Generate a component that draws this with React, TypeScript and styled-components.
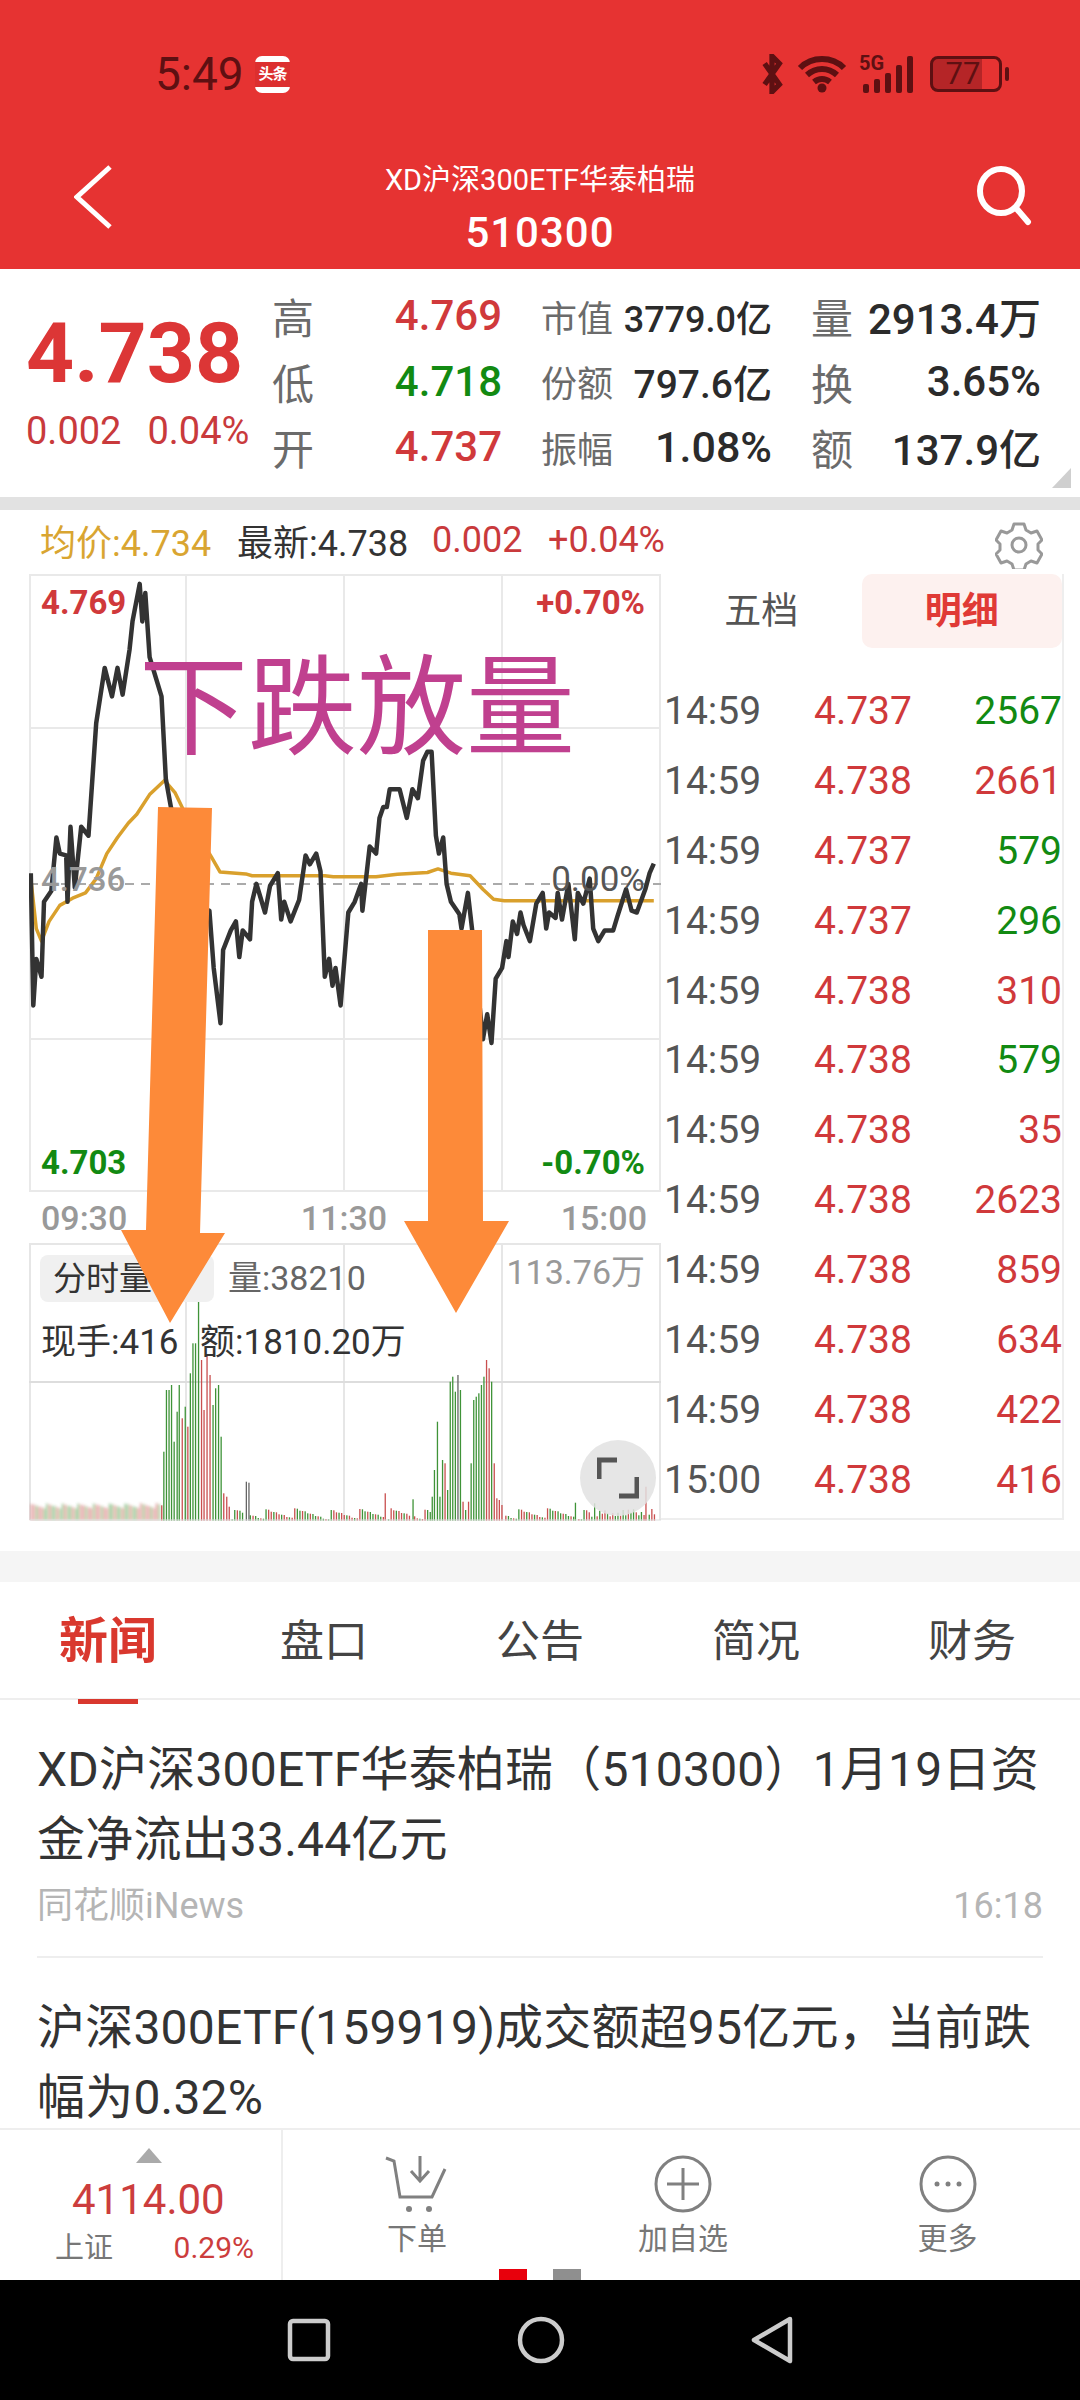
import React from 'react'
import styled, { createGlobalStyle } from 'styled-components'

const RED = '#d0393b'
const GREEN = '#128a12'

const GlobalStyle = createGlobalStyle`
  html, body { margin: 0; padding: 0; background: #fff; }
  body { font-family: Roboto, "Noto Sans CJK SC", sans-serif; }
`

const Page = styled.div`
  width: 1080px;
  height: 2400px;
  display: flex;
  flex-direction: column;
  overflow: hidden;
  background: #fff;
  position: relative;
`

/* top red part */
const RedHead = styled.header`
  height: 269px;
  background: #e63332;
  flex: none;
  display: flex;
  flex-direction: column;
`
const StatusBar = styled.div`
  height: 146px;
  padding: 54px 78px 0 155px;
  box-sizing: border-box;
  display: flex;
  align-items: flex-start;
  color: #5e1012;
`
const Clock = styled.span`
  font-size: 46px;
  line-height: 40px;
  width: 100px;
`
const AppBadge = styled.span`
  width: 35px;
  height: 37px;
  margin-top: 2px;
  border-radius: 7px;
  background: linear-gradient(#fff 0 15%, #dc2f2f 15% 85%, #fff 85%);
  color: #fff;
  font-size: 15px;
  font-weight: 700;
  line-height: 37px;
  text-align: center;
  white-space: nowrap;
  letter-spacing: -1px;
`
const StatusIcons = styled.div`
  margin-left: auto;
  display: flex;
  align-items: center;
  height: 40px;
  gap: 12px;
`
const SignalWrap = styled.span`
  position: relative;
  width: 56px;
  height: 38px;
  svg { display: block; }
`
const SignalTag = styled.span`
  position: absolute;
  left: 0;
  top: -2px;
  font-size: 20px;
  font-weight: 700;
  line-height: 20px;
`
const BatteryBox = styled.span`
  width: 72px;
  height: 36px;
  margin-left: 3px;
  border: 3px solid #5e1012;
  border-radius: 8px;
  box-sizing: border-box;
  background: linear-gradient(90deg, #b52527 0 74%, transparent 74%);
  font-size: 31px;
  line-height: 30px;
  text-align: center;
  padding-right: 6px;
  position: relative;
  &::after {
    content: '';
    position: absolute;
    right: -10px;
    top: 8px;
    width: 4px;
    height: 14px;
    border-radius: 2px;
    background: #5e1012;
  }
`
const NavRow = styled.div`
  flex: 1;
  display: grid;
  grid-template-columns: 160px 1fr 160px;
  align-items: start;
`
const BackIcon = styled.svg`
  margin: 18px 0 0 74px;
`
const SearchIcon = styled.svg`
  margin: 20px 46px 0 0;
  justify-self: end;
`
const TitleBlock = styled.div`
  text-align: center;
  color: #fff;
  padding-top: 14px;
`
const TitleName = styled.div`
  font-size: 29px;
  line-height: 40px;
`
const TitleCode = styled.div`
  font-size: 42px;
  font-weight: 500;
  line-height: 50px;
  margin-top: 8px;
  letter-spacing: 1px;
`

/* quote block */
const QuotePanel = styled.section`
  height: 228px;
  flex: none;
  display: flex;
  position: relative;
  background: #fff;
  padding-top: 14px;
  box-sizing: border-box;
`
const PriceCol = styled.div`
  width: 272px;
  padding-left: 26px;
  box-sizing: border-box;
  color: ${RED};
`
const BigPrice = styled.div`
  font-size: 84px;
  font-weight: 700;
  line-height: 96px;
  margin-top: 23px;
  color: #dc3636;
`
const PriceSub = styled.div`
  font-size: 38px;
  line-height: 44px;
  margin-top: 7px;
  display: flex;
  gap: 26px;
  color: #c93a3c;
`
const QuoteGrid = styled.div`
  display: grid;
  grid-template-columns: 230px 231px 230px;
  grid-auto-rows: 65.5px;
  column-gap: 39px;
  align-items: center;
`
const QuoteCell = styled.div`
  display: flex;
  justify-content: space-between;
  align-items: center;
  white-space: nowrap;
`
const QuoteLabel = styled.span<{ $size?: number }>`
  font-size: ${p => p.$size ?? 42}px;
  color: #6b6b6b;
`
const QuoteValue = styled.span<{ $size?: number; $color?: string; $weight?: number }>`
  font-size: ${p => p.$size ?? 42}px;
  color: ${p => p.$color ?? '#2b2b2b'};
  font-weight: ${p => p.$weight ?? 500};
`
const CornerMark = styled.span`
  position: absolute;
  right: 9px;
  bottom: 9px;
  width: 19px;
  height: 20px;
  background: #cfcfcf;
  clip-path: polygon(100% 0, 100% 100%, 0 100%);
`
const GrayStrip = styled.div<{ $h: number; $c: string }>`
  height: ${p => p.$h}px;
  background: ${p => p.$c};
  flex: none;
`

/* chart section */
const ChartSection = styled.section`
  height: 1041px;
  flex: none;
  position: relative;
`
const ChartHeader = styled.div`
  height: 64px;
  padding: 0 0 4px 40px;
  box-sizing: border-box;
  display: flex;
  align-items: center;
  font-size: 36px;
  white-space: nowrap;
  position: relative;
`
const HeadText = styled.span<{ $color: string; $w: number }>`
  color: ${p => p.$color};
  width: ${p => p.$w}px;
`
const GearWrap = styled.span`
  position: absolute;
  left: 995px;
  top: 11px;
  line-height: 0;
`
const ChartBody = styled.div`
  display: flex;
  padding-left: 29px;
`
const ChartCol = styled.div`
  width: 632px;
  flex: none;
`
const PlotBox = styled.div<{ $h: number }>`
  position: relative;
  height: ${p => p.$h}px;
  svg { display: block; }
`
const PlotLabel = styled.span<{
  $left?: number
  $right?: number
  $top: number
  $color: string
  $size?: number
  $weight?: number
}>`
  position: absolute;
  ${p => (p.$left !== undefined ? `left: ${p.$left}px;` : '')}
  ${p => (p.$right !== undefined ? `right: ${p.$right}px;` : '')}
  top: ${p => p.$top}px;
  color: ${p => p.$color};
  font-size: ${p => p.$size ?? 33}px;
  font-weight: ${p => p.$weight ?? 500};
  line-height: 40px;
  white-space: nowrap;
`
const TimeAxis = styled.div`
  height: 51px;
  padding: 0 14px 0 12px;
  display: flex;
  justify-content: space-between;
  align-items: center;
  color: #999;
  font-size: 34px;
  font-weight: 500;
`
const ModeChip = styled.span`
  position: absolute;
  left: 11px;
  top: 12px;
  width: 174px;
  height: 47px;
  padding-left: 13px;
  box-sizing: border-box;
  border-radius: 8px;
  background: #f0f0f0;
  color: #333;
  font-size: 33px;
  line-height: 47px;
`
const ExpandButton = styled.span`
  position: absolute;
  left: 551px;
  top: 197px;
  width: 76px;
  height: 76px;
  border-radius: 50%;
  background: rgba(226, 226, 226, 0.85);
  display: flex;
  align-items: center;
  justify-content: center;
`
const TradePanel = styled.div`
  width: 403px;
  height: 946px;
  flex: none;
  box-sizing: border-box;
  border-right: 2px solid #eee;
  border-bottom: 2px solid #eee;
`
const TabRow = styled.div`
  display: flex;
  height: 74px;
  margin-bottom: 28px;
`
const TradeTab = styled.div<{ $on?: boolean }>`
  flex: 1;
  text-align: center;
  font-size: 37px;
  line-height: 76px;
  border-radius: 10px;
  color: ${p => (p.$on ? '#e03a36' : '#555')};
  font-weight: ${p => (p.$on ? 700 : 400)};
  background: ${p => (p.$on ? '#fdf1ef' : 'transparent')};
`
const TradeRow = styled.div`
  height: 69.9px;
  padding-left: 3px;
  display: grid;
  grid-template-columns: 150px 97px 1fr;
  align-items: center;
  font-size: 39px;
`
const TradeTime = styled.span`
  color: #555;
`
const TradePrice = styled.span`
  color: ${RED};
`
const TradeVol = styled.span<{ $up: boolean }>`
  color: ${p => (p.$up ? RED : GREEN)};
  text-align: right;
`
const Annotation = styled.div`
  position: absolute;
  left: 139px;
  top: 142px;
  color: #c0408f;
  font-size: 109px;
  font-weight: 400;
  line-height: 114px;
  white-space: nowrap;
`
const ArrowLayer = styled.svg`
  position: absolute;
  left: 0;
  top: 0;
  pointer-events: none;
`

/* news */
const NewsTabs = styled.nav`
  height: 116px;
  flex: none;
  display: grid;
  grid-template-columns: repeat(5, 1fr);
  border-bottom: 2px solid #eee;
`
const NewsTab = styled.div<{ $on?: boolean }>`
  text-align: center;
  font-size: ${p => (p.$on ? 49 : 44)}px;
  font-weight: ${p => (p.$on ? 700 : 400)};
  color: ${p => (p.$on ? '#d9382e' : '#444')};
  line-height: 120px;
  position: relative;
  ${p =>
    p.$on
      ? `&::after {
    content: '';
    position: absolute;
    left: 78px;
    bottom: -2px;
    width: 60px;
    height: 5px;
    background: #d9382e;
  }`
      : ''}
`
const NewsList = styled.div`
  flex: 1;
  min-height: 0;
  overflow: hidden;
  padding: 0 37px;
`
const NewsItem = styled.article`
  padding-top: 35px;
  height: 221px;
  box-sizing: content-box;
  border-bottom: 2px solid #eee;
  &:last-child { border-bottom: 0; }
`
const NewsTitle = styled.div`
  font-size: 48px;
  letter-spacing: 0.2px;
  line-height: 70px;
  color: #333;
`
const NewsMeta = styled.div`
  margin-top: 8px;
  display: flex;
  justify-content: space-between;
  font-size: 36px;
  line-height: 46px;
  color: #b5b5b5;
`

/* bottom action bar */
const ActionBar = styled.footer`
  height: 152px;
  flex: none;
  display: flex;
  border-top: 2px solid #eee;
  box-sizing: border-box;
  position: relative;
  overflow: hidden;
`
const IndexBox = styled.div`
  width: 283px;
  flex: none;
  box-sizing: border-box;
  border-right: 2px solid #eee;
  padding: 18px 27px 0 55px;
  display: flex;
  flex-direction: column;
`
const UpMark = styled.span`
  width: 26px;
  height: 15px;
  margin-left: 81px;
  background: #aaa;
  clip-path: polygon(50% 0, 100% 100%, 0 100%);
`
const IndexValue = styled.div`
  color: #cc3d3d;
  font-size: 42px;
  line-height: 50px;
  margin: 12px 0 0 17px;
`
const IndexMeta = styled.div`
  display: flex;
  justify-content: space-between;
  font-size: 29px;
  line-height: 40px;
  margin-top: 3px;
  color: #777;
`
const IndexPct = styled.span`
  color: #cc3d3d;
  font-size: 30px;
`
const ActionList = styled.div`
  flex: 1;
  display: grid;
  grid-template-columns: 268px 264px 265px;
`
const ActionItem = styled.div`
  display: flex;
  flex-direction: column;
  align-items: center;
  padding-top: 25px;
  color: #777;
  font-size: 30px;
  line-height: 40px;
  svg { display: block; margin-bottom: 6px; }
`
const PagerDot = styled.span<{ $left: number; $c: string }>`
  position: absolute;
  left: ${p => p.$left}px;
  bottom: 0;
  width: 28px;
  height: 11px;
  background: ${p => p.$c};
`
const SystemNav = styled.div`
  height: 120px;
  flex: none;
  background: #000;
  display: flex;
  align-items: center;
  justify-content: center;
  gap: 186px;
`

type Pt = [number, number]

// traced from the reference crops, in crop pixels
const priceTrace: Pt[] = [
  [72, 1045], [78, 1415], [85, 1285], [97, 1335], [103, 1125], [120, 1095], [132, 945], [140, 990], [155, 995],
  [158, 1125], [165, 915], [175, 1085], [190, 915], [207, 940], [225, 625], [245, 470], [262, 550], [275, 470],
  [287, 545], [303, 420], [310, 340], [327, 235], [333, 340], [340, 260], [350, 440], [378, 550], [388, 780],
  [400, 860], [470, 1200], [490, 1150], [500, 1310], [516, 1465], [522, 1260], [540, 1205], [552, 1180],
  [560, 1280], [568, 1205], [585, 1230], [590, 1125], [600, 1075], [620, 1155], [632, 1080], [650, 1045],
  [658, 1175], [665, 1125], [680, 1180], [700, 1120], [715, 995], [725, 1020], [740, 990], [750, 1040],
  [760, 1335], [770, 1285], [778, 1360], [785, 1310], [797, 1415], [815, 1155], [830, 1125], [845, 1075],
  [848, 1150], [865, 970], [880, 990], [888, 890], [897, 860], [905, 860], [912, 810], [935, 810], [952, 890],
  [965, 810], [978, 835], [990, 730], [1000, 705], [1010, 705], [1020, 940], [1027, 990], [1037, 945],
  [1045, 1075], [1055, 1125], [1075, 1160], [1080, 1200], [1095, 1100], [1105, 1205], [1130, 1510], [1140, 1440],
  [1150, 1520], [1160, 1340], [1175, 1310], [1185, 1235], [1190, 1280], [1200, 1180], [1210, 1215], [1218, 1155],
  [1225, 1190], [1240, 1235], [1255, 1130], [1270, 1100], [1278, 1200], [1285, 1155], [1300, 1170], [1305, 1100],
  [1315, 1175], [1330, 1075], [1345, 1230], [1352, 1100], [1365, 1130], [1380, 1060], [1388, 1200], [1400, 1235],
  [1415, 1205], [1435, 1205], [1445, 1165], [1465, 1090], [1478, 1150], [1490, 1155], [1510, 1090], [1520, 1045],
  [1530, 1018],
]
const avgTrace: Pt[] = [
  [72, 1060], [85, 1200], [97, 1235], [115, 1180], [140, 1135], [170, 1115], [200, 1100], [225, 1060], [250, 990],
  [275, 945], [300, 905], [320, 880], [350, 825], [385, 785], [410, 820], [430, 870], [495, 1000], [515, 1042],
  [575, 1047], [590, 1052], [760, 1052], [780, 1055], [880, 1055], [930, 1048], [1000, 1043], [1025, 1033],
  [1055, 1045], [1100, 1052], [1130, 1090], [1155, 1118], [1180, 1122], [1530, 1122],
]
const toLine = (pts: Pt[]) =>
  pts.map(([x, y]) => `${(x / 2.34 - 29).toFixed(1)},${(500 + y / 2.8 - 574).toFixed(1)}`).join(' ')

// [crop x, crop top, colour]
type Bar = [number, number, 'g' | 'r' | 'k']
const bigBars: Bar[] = [
  [382, 1175, 'g'], [388, 990, 'g'], [394, 990, 'g'], [400, 975, 'g'], [406, 1145, 'g'], [413, 1055, 'g'],
  [418, 975, 'g'], [425, 1075, 'r'], [432, 1040, 'g'], [438, 1100, 'r'], [444, 940, 'g'], [450, 850, 'g'],
  [456, 850, 'g'], [463, 650, 'g'], [470, 900, 'r'], [476, 1050, 'r'], [483, 885, 'r'], [490, 945, 'r'],
  [497, 1035, 'g'], [503, 985, 'g'], [510, 975, 'g'], [516, 1130, 'g'], [522, 1300, 'r'], [529, 1310, 'r'],
  [535, 1340, 'r'], [575, 1265, 'k'], [581, 1268, 'k'], [900, 1300, 'r'], [965, 1318, 'g'],
  [1010, 1310, 'g'], [1015, 1230, 'g'], [1022, 1085, 'g'], [1028, 1310, 'g'], [1034, 1200, 'g'], [1040, 1210, 'r'],
  [1046, 1290, 'g'], [1052, 965, 'g'], [1058, 950, 'g'], [1064, 995, 'g'], [1070, 945, 'k'], [1076, 990, 'g'],
  [1082, 1325, 'r'], [1088, 1350, 'g'], [1095, 1325, 'r'], [1101, 1210, 'g'], [1107, 1020, 'g'], [1113, 1010, 'g'],
  [1119, 1000, 'g'], [1125, 975, 'g'], [1131, 950, 'g'], [1137, 900, 'r'], [1143, 925, 'r'], [1149, 965, 'g'],
  [1155, 1210, 'r'], [1161, 1315, 'r'], [1167, 1320, 'r'], [1173, 1335, 'r'], [1345, 1328, 'g'], [1390, 1330, 'g'],
  [1510, 1280, 'r'],
]
const barFill = { g: '#3f9338', r: '#c94f4f', k: '#666' }

const smallBars: Bar[] = []
for (let i = 0; i < 240; i++) {
  const x = 72 + i * 6.1
  if (bigBars.some(b => Math.abs(b[0] - x) < 3.2) || (x > 382 && x < 540)) continue
  const n = (i * 7919 + 13) % 97
  const tall = x < 380 ? 1345 - (n % 16) : x > 1380 && x < 1530 ? 1372 - (n % 26) : 1378 - (n % 34)
  smallBars.push([x, tall, n % 2 ? 'r' : 'g'])
}
const barRect = ([x, top, c]: Bar, i: number) => (
  <rect
    key={i}
    x={(x / 2.34 - 29).toFixed(1)}
    y={(1060 + top / 3 - 1243).toFixed(1)}
    width={1.3}
    height={(1382 - top) / 3}
    fill={barFill[c]}
  />
)

const trades: [string, string, string, boolean][] = [
  ['14:59', '4.737', '2567', false],
  ['14:59', '4.738', '2661', true],
  ['14:59', '4.737', '579', false],
  ['14:59', '4.737', '296', false],
  ['14:59', '4.738', '310', true],
  ['14:59', '4.738', '579', false],
  ['14:59', '4.738', '35', true],
  ['14:59', '4.738', '2623', true],
  ['14:59', '4.738', '859', true],
  ['14:59', '4.738', '634', true],
  ['14:59', '4.738', '422', true],
  ['15:00', '4.738', '416', true],
]

const PriceChart = () => (
  <svg width={632} height={618}>
    <g stroke="#e9e9e9" strokeWidth={2} fill="none">
      <rect x={1} y={1} width={630} height={616} />
      <path d="M157 0V618M315 0V618M473 0V618M0 154H632M0 465H632" />
    </g>
    <path d="M0 310H632" stroke="#aaa" strokeWidth={2} strokeDasharray="9 7" />
    <polyline points={toLine(avgTrace)} fill="none" stroke="#d9a02c" strokeWidth={3.5} strokeLinejoin="round" />
    <polyline points={toLine(priceTrace)} fill="none" stroke="#333" strokeWidth={4.5} strokeLinejoin="round" />
  </svg>
)

const VolumeChart = () => {
  const smudged = smallBars.filter(b => b[0] < 375)
  const rest = smallBars.filter(b => b[0] >= 375)
  return (
    <svg width={632} height={278}>
      <defs>
        <filter id="smudge">
          <feGaussianBlur stdDeviation="1.6" />
        </filter>
      </defs>
      <g stroke="#e6e6e6" strokeWidth={2} fill="none">
        <path d="M1 0V277M631 0V277M0 1H632M157 0V277M315 0V277M473 0V277" />
        <path d="M0 139H632" stroke="#ddd" />
      </g>
      <g filter="url(#smudge)" opacity={0.75}>{smudged.map(barRect)}</g>
      {rest.map(barRect)}
      {bigBars.map(barRect)}
      <path d="M1 277H632" stroke="#ddd" strokeWidth={1} />
    </svg>
  )
}

const App = () => {
  return (
    <Page>
      <GlobalStyle />
      <RedHead>
        <StatusBar>
          <Clock>5:49</Clock>
          <AppBadge>头条</AppBadge>
          <StatusIcons>
            <svg width={26} height={40} viewBox="0 0 24 38" fill="none" stroke="#5e1012" strokeWidth={5}>
              <path d="M5 9l14 20-7 7V2l7 7L5 29" />
            </svg>
            <svg width={50} height={40} viewBox="0 0 50 38" fill="none" stroke="#5e1012" strokeWidth={6}>
              <path d="M3 13C15 1 35 1 47 13M10 20c9-8 21-8 30 0M17 27c5-4 11-4 16 0" />
              <circle cx={25} cy={33} r={4.5} fill="#5e1012" stroke="none" />
            </svg>
            <SignalWrap>
              <SignalTag>5G</SignalTag>
              <svg width={56} height={38} viewBox="0 0 56 38" fill="#5e1012">
                <rect x={4} y={29} width={6} height={9} rx={2} />
                <rect x={15} y={24} width={6} height={14} rx={2} />
                <rect x={26} y={18} width={6} height={20} rx={2} />
                <rect x={37} y={10} width={6} height={28} rx={2} />
                <rect x={48} y={1} width={6} height={37} rx={2} />
              </svg>
            </SignalWrap>
            <BatteryBox>77</BatteryBox>
          </StatusIcons>
        </StatusBar>
        <NavRow>
          <BackIcon width={40} height={66} viewBox="0 0 40 66" fill="none" stroke="#fff" strokeWidth={5}>
            <path d="M36 3L3 33l33 30" />
          </BackIcon>
          <TitleBlock>
            <TitleName>XD沪深300ETF华泰柏瑞</TitleName>
            <TitleCode>510300</TitleCode>
          </TitleBlock>
          <SearchIcon width={58} height={62} viewBox="0 0 58 62" fill="none" stroke="#fff" strokeWidth={6}>
            <ellipse cx={25} cy={25} rx={21} ry={22} />
            <path d="M40 42l12 14" strokeLinecap="round" />
          </SearchIcon>
        </NavRow>
      </RedHead>

      <QuotePanel>
        <PriceCol>
          <BigPrice>4.738</BigPrice>
          <PriceSub>
            <span>0.002</span>
            <span>0.04%</span>
          </PriceSub>
        </PriceCol>
        <QuoteGrid>
          <QuoteCell>
            <QuoteLabel>高</QuoteLabel>
            <QuoteValue $color={RED}>4.769</QuoteValue>
          </QuoteCell>
          <QuoteCell>
            <QuoteLabel $size={36}>市值</QuoteLabel>
            <QuoteValue $size={36}>3779.0亿</QuoteValue>
          </QuoteCell>
          <QuoteCell>
            <QuoteLabel>量</QuoteLabel>
            <QuoteValue>2913.4万</QuoteValue>
          </QuoteCell>
          <QuoteCell>
            <QuoteLabel>低</QuoteLabel>
            <QuoteValue $color={GREEN}>4.718</QuoteValue>
          </QuoteCell>
          <QuoteCell>
            <QuoteLabel $size={36}>份额</QuoteLabel>
            <QuoteValue $size={39}>797.6亿</QuoteValue>
          </QuoteCell>
          <QuoteCell>
            <QuoteLabel>换</QuoteLabel>
            <QuoteValue>3.65%</QuoteValue>
          </QuoteCell>
          <QuoteCell>
            <QuoteLabel>开</QuoteLabel>
            <QuoteValue $color={RED}>4.737</QuoteValue>
          </QuoteCell>
          <QuoteCell>
            <QuoteLabel $size={36}>振幅</QuoteLabel>
            <QuoteValue $size={43}>1.08%</QuoteValue>
          </QuoteCell>
          <QuoteCell>
            <QuoteLabel>额</QuoteLabel>
            <QuoteValue $size={42}>137.9亿</QuoteValue>
          </QuoteCell>
        </QuoteGrid>
        <CornerMark />
      </QuotePanel>
      <GrayStrip $h={13} $c="#e2e2e2" />

      <ChartSection>
        <ChartHeader>
          <HeadText $color="#d9a531" $w={197}>均价:4.734</HeadText>
          <HeadText $color="#333" $w={195}>最新:4.738</HeadText>
          <HeadText $color="#c93a3c" $w={116}>0.002</HeadText>
          <HeadText $color="#c93a3c" $w={124}>+0.04%</HeadText>
          <GearWrap>
            <svg width={48} height={48} viewBox="0 0 48 48" fill="none" stroke="#999" strokeWidth={3} strokeLinejoin="round">
              <path d="M19 3h10l2 6 5 3 6-2 5 9-4 4v6l4 4-5 9-6-2-5 3-2 6H19l-2-6-5-3-6 2-5-9 4-4v-6l-4-4 5-9 6 2 5-3z" />
              <circle cx={24} cy={24} r={7} />
            </svg>
          </GearWrap>
        </ChartHeader>
        <ChartBody>
          <ChartCol>
            <PlotBox $h={618}>
              <PriceChart />
              <PlotLabel $left={12} $top={9} $color={RED} $weight={700}>4.769</PlotLabel>
              <PlotLabel $right={16} $top={9} $color={RED} $weight={700}>+0.70%</PlotLabel>
              <PlotLabel $left={12} $top={286} $color="#999">4.736</PlotLabel>
              <PlotLabel $right={16} $top={286} $color="#555" $weight={400} $size={35}>0.00%</PlotLabel>
              <PlotLabel $left={12} $top={569} $color={GREEN} $weight={700}>4.703</PlotLabel>
              <PlotLabel $right={16} $top={569} $color={GREEN} $weight={700}>-0.70%</PlotLabel>
            </PlotBox>
            <TimeAxis>
              <span>09:30</span>
              <span>11:30</span>
              <span>15:00</span>
            </TimeAxis>
            <PlotBox $h={277}>
              <VolumeChart />
              <ModeChip>分时量</ModeChip>
              <PlotLabel $left={199} $top={15} $color="#666" $size={34} $weight={400}>量:38210</PlotLabel>
              <PlotLabel $right={16} $top={9} $color="#999" $size={34} $weight={400}>113.76万</PlotLabel>
              <PlotLabel $left={12} $top={80} $color="#333" $size={35} $weight={400}>现手:416</PlotLabel>
              <PlotLabel $left={171} $top={80} $color="#333" $size={35} $weight={400}>额:1810.20万</PlotLabel>
              <ExpandButton>
                <svg width={42} height={42} viewBox="0 0 42 42" fill="none" stroke="#555" strokeWidth={5}>
                  <path d="M2 22V3h18M40 20v19H22" />
                </svg>
              </ExpandButton>
            </PlotBox>
          </ChartCol>
          <TradePanel>
            <TabRow>
              <TradeTab>五档</TradeTab>
              <TradeTab $on>明细</TradeTab>
            </TabRow>
            {trades.map(([t, p, v, up], i) => (
              <TradeRow key={i}>
                <TradeTime>{t}</TradeTime>
                <TradePrice>{p}</TradePrice>
                <TradeVol $up={up}>{v}</TradeVol>
              </TradeRow>
            ))}
          </TradePanel>
        </ChartBody>
        <Annotation>下跌放量</Annotation>
        <ArrowLayer width={1080} height={900}>
          <polygon
            points="158,297 212,298 200,723 225,723 170,813 121,720 146,720"
            fill="#fd8a39"
          />
          <polygon points="428,420 482,420 483,711 509,711 456,803 404,711 428,711" fill="#fd8a39" />
        </ArrowLayer>
      </ChartSection>
      <GrayStrip $h={31} $c="#f5f5f5" />

      <NewsTabs>
        <NewsTab $on>新闻</NewsTab>
        <NewsTab>盘口</NewsTab>
        <NewsTab>公告</NewsTab>
        <NewsTab>简况</NewsTab>
        <NewsTab>财务</NewsTab>
      </NewsTabs>
      <NewsList>
        <NewsItem>
          <NewsTitle>XD沪深300ETF华泰柏瑞（510300）1月19日资金净流出33.44亿元</NewsTitle>
          <NewsMeta>
            <span>同花顺iNews</span>
            <span>16:18</span>
          </NewsMeta>
        </NewsItem>
        <NewsItem>
          <NewsTitle>沪深300ETF(159919)成交额超95亿元，当前跌幅为0.32%</NewsTitle>
        </NewsItem>
      </NewsList>

      <ActionBar>
        <IndexBox>
          <UpMark />
          <IndexValue>4114.00</IndexValue>
          <IndexMeta>
            <span>上证</span>
            <IndexPct>0.29%</IndexPct>
          </IndexMeta>
        </IndexBox>
        <ActionList>
          <ActionItem>
            <svg width={64} height={58} viewBox="0 0 64 58" fill="none" stroke="#808080" strokeWidth={3}>
              <path d="M1 3l8 3 6 36h32l13-28M35 1v24M26 16l9 10 9-10" />
              <circle cx={24} cy={54} r={3} fill="#808080" stroke="none" />
              <circle cx={44} cy={54} r={3} fill="#808080" stroke="none" />
            </svg>
            下单
          </ActionItem>
          <ActionItem>
            <svg width={58} height={58} viewBox="0 0 58 58" fill="none" stroke="#808080" strokeWidth={3}>
              <circle cx={29} cy={29} r={27} />
              <path d="M29 13v32M13 29h32" />
            </svg>
            加自选
          </ActionItem>
          <ActionItem>
            <svg width={58} height={58} viewBox="0 0 58 58" fill="none" stroke="#808080" strokeWidth={3}>
              <circle cx={29} cy={29} r={27} />
              <circle cx={18} cy={29} r={2.5} fill="#808080" stroke="none" />
              <circle cx={29} cy={29} r={2.5} fill="#808080" stroke="none" />
              <circle cx={40} cy={29} r={2.5} fill="#808080" stroke="none" />
            </svg>
            更多
          </ActionItem>
        </ActionList>
        <PagerDot $left={499} $c="#e8000c" />
        <PagerDot $left={553} $c="#8f8f8f" />
      </ActionBar>

      <SystemNav>
        <svg width={44} height={44} viewBox="0 0 44 44" fill="none" stroke="#ccc" strokeWidth={4.5}>
          <rect x={3} y={3} width={38} height={38} rx={3} />
        </svg>
        <svg width={48} height={48} viewBox="0 0 48 48" fill="none" stroke="#ccc" strokeWidth={4.5}>
          <circle cx={24} cy={24} r={21} />
        </svg>
        <svg width={42} height={48} viewBox="0 0 42 48" fill="none" stroke="#ccc" strokeWidth={4.5} strokeLinejoin="round">
          <path d="M39 3L3 24l36 21z" />
        </svg>
      </SystemNav>
    </Page>
  )
}

export default App
